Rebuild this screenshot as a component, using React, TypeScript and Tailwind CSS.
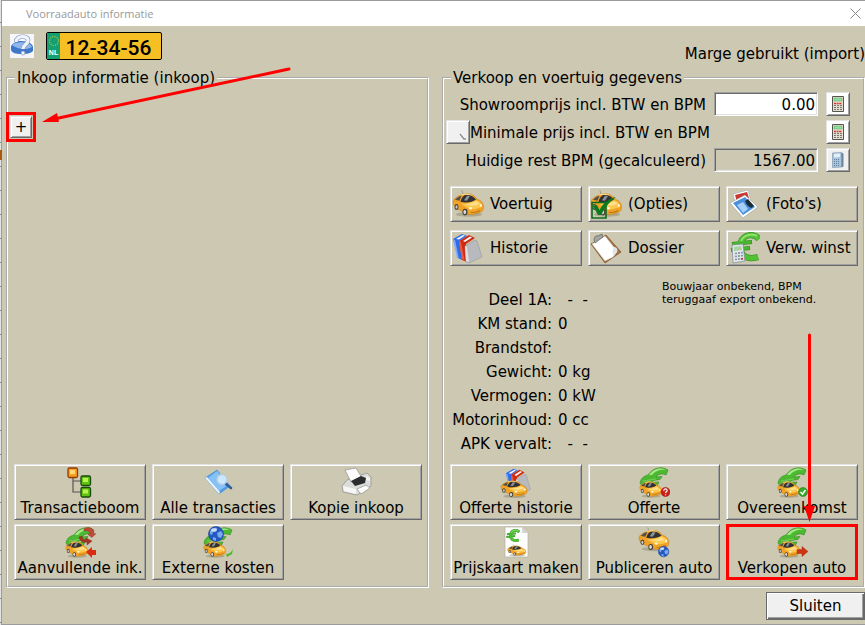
import type { ReactNode } from 'react';
import clsx from 'clsx';

const raised =
  'border border-t-[#e3e3e3] border-l-[#e3e3e3] border-r-[#696969] border-b-[#696969] shadow-[inset_1px_1px_0_#ffffff,inset_-1px_-1px_0_#a0a0a0]';
const sunken =
  'border border-t-[#a0a0a0] border-l-[#a0a0a0] border-r-white border-b-white shadow-[inset_1px_1px_0_#696969,inset_-1px_-1px_0_#e3e3e3]';

function Car() {
  return (
    <g>
      <ellipse cx="17" cy="26" rx="13" ry="2.500" fill="#8d8874" opacity="0.5" />
      <path d="M10 0.500l1 4" stroke="#777" strokeWidth="0.600" />
      <path
        d="M1 13c0-3 2-4 4-5.500 3-2.500 6-3.500 10-3.500 5 0 8 2.500 10.500 6 4 1 6 4.500 6 8.500 0 3-1 4.500-4 5.500-4 2-8 2.500-11.500 2-3-1-5-3.500-8-4.500-4-2-7-4.500-7-8.500z"
        fill="#f0a326"
        stroke="#b87a1c"
        strokeWidth="0.500"
      />
      <path d="M9 14c4 1 9 0 14-3 4 0 7 3 7 7-3 1-8 3-12 2.500-3-2-6-3.500-9-6.500z" fill="#fcc74c" />
      <path d="M13 15c4 0 8-1 11-3 2 1 3 2 3.500 3-4 2-9 2.500-14.500 0z" fill="#ffe08c" />
      <path d="M3 10.500c1.500-2.500 4-4 6.500-4.500l-2 5.500z" fill="#55524a" />
      <path d="M8.500 12.500c.5-3 2-5.500 4-7 5-1 9 1 11.500 4.500-4 3-9.500 4-15.500 2.500z" fill="#2f3134" />
      <path d="M12 11l3-5 3 .5-3 5z" fill="#8c9298" />
      <path d="M7 5.800c4-2.500 9-2.500 13-.3-4-.8-9-.8-13 .3z" fill="#fee493" />
      <ellipse cx="4.500" cy="18" rx="2" ry="3.200" fill="#4a463f" />
      <ellipse cx="4.500" cy="18" rx="1" ry="1.900" fill="#cfcfcf" />
      <ellipse cx="13" cy="23.500" rx="2.500" ry="3.500" fill="#45423c" />
      <ellipse cx="12.800" cy="23.500" rx="1.400" ry="2.200" fill="#dcdcdc" />
      <ellipse cx="18.500" cy="19.500" rx="1.500" ry="1.300" fill="#fff9df" />
      <ellipse cx="28.800" cy="16.500" rx="1" ry="1.400" fill="#fff9df" />
      <path d="M19 23.500c4 0 7-1 9.500-2.500l-.5 1.500c-3 1.500-6 2-9 2z" fill="#b57416" />
    </g>
  );
}

function Euro() {
  return (
    <g>
      <path d="M31 7C26 1 16 2 13 10c-4 11 4 19 17 15" stroke="#2f8a1d" strokeWidth="6.200" />
      <path d="M4 12l20-2M3 18l19-2" stroke="#2f8a1d" strokeWidth="4" />
      <path d="M31 7C26 1 16 2 13 10c-4 11 4 19 17 15" stroke="#52c234" strokeWidth="5.200" />
      <path d="M4.500 12l19-2M3.500 18l18-2" stroke="#48b52e" strokeWidth="3.200" />
      <path d="M29 4C23 1 16 3 13 9" stroke="#98e376" strokeWidth="1.600" />
    </g>
  );
}

function Books() {
  return (
    <g>
      <path d="M1 7l9-5 5 2-8 5 3 19-4-2z" fill="#2f6be8" />
      <path d="M1 7l2 1 4 19-2-1z" fill="#7fabff" />
      <path d="M4 7l7-4 2 .5-6 4z" fill="#f4f7ff" />
      <path d="M7 9l10-6 6 3-9 6 1 18-5-2z" fill="#cf2a12" />
      <path d="M7 9l2 1 3.500 18-2.500-1z" fill="#e85a42" />
      <path d="M11 9l7-4.500 2 1-7 4.500z" fill="#fbf3f1" />
      <path d="M13 14l10-6 2 1 5 16-13 6-3-1z" fill="#b9babd" stroke="#909196" strokeWidth="0.500" />
      <path d="M13 14l2 1 2 15-3-1z" fill="#dfe0e2" />
    </g>
  );
}

function Globe() {
  return (
    <g>
      <circle cx="8" cy="8" r="7.500" fill="#2458c4" stroke="#173c8f" strokeWidth="0.600" />
      <path d="M2 5c2-3 5-4 7-3l-1 3-3 1-1 3-2-1zM9 7l4-2 2 3-2 4-3-1zM5 11l3 1v3l-3-1z" fill="#7aaae8" />
      <ellipse cx="6" cy="4" rx="3" ry="1.800" fill="#fff" opacity="0.6" />
    </g>
  );
}

function Icon({ children }: { children: ReactNode }) {
  return (
    <svg viewBox="0 0 32 32" className="size-8 shrink-0" fill="none" aria-hidden="true">
      {children}
    </svg>
  );
}

function EuroCar({ children }: { children?: ReactNode }) {
  return (
    <Icon>
      <path d="M2 17c1-5 4-7 8-8 4-6 12-10 20-5l-2 5c-4-2-8-1-10 2l6-.5-2 3-7 1-1 2 7-.5-2 4H4z" fill="#4cba30" stroke="#2f8a1d" strokeWidth="0.600" />
      <path d="M11 9c4-6 11-8 17-5-6-1-11 1-14 5z" fill="#a5e886" />
      <path d="M5 15l13-2M5 18l12-2" stroke="#7fd65e" strokeWidth="0.800" />
      <g transform="translate(1 13) scale(.72 .66)">
        <Car />
      </g>
      {children}
    </Icon>
  );
}

const icons = {
  car: (
    <Icon>
      <g transform="translate(0 2) scale(1 .94)">
        <Car />
      </g>
    </Icon>
  ),
  options: (
    <Icon>
      <g transform="translate(0 2) scale(1 .94)">
        <Car />
      </g>
      <path d="M2 14.500h14V30H2z" stroke="#0c6b1c" strokeWidth="1.600" />
      <path d="M3 18l4-1 2.500 5c4-7 8-11 16.500-13-7 5-11 11-15 18H8z" fill="#0c7a1d" />
    </Icon>
  ),
  photos: (
    <Icon>
      <path d="M5 6l15-4 4 15-15 5z" fill="#fff" stroke="#aaa" strokeWidth="0.600" />
      <path d="M7 7l12-3 2 6-12 4z" fill="#c73830" />
      <path d="M2 15L17 7l13 12-15 11z" fill="#fff" stroke="#9b9b9b" strokeWidth="0.600" />
      <path d="M5 15l12-6 10 10-12 8z" fill="#4b8fdc" />
      <path d="M9 17l6-3 5 7-5 4z" fill="#a5d0f8" />
      <path d="M17 13l3-2 6 7-3 2-4-3z" fill="#1d2c35" />
    </Icon>
  ),
  history: (
    <Icon>
      <Books />
    </Icon>
  ),
  dossier: (
    <Icon>
      <path d="M1 12L16 3l15 17-16 11z" fill="#a8703c" stroke="#70441f" strokeWidth="0.600" />
      <path d="M2 12L15 4l12 15-4 6-8 4z" fill="#fff" stroke="#c9c9c9" strokeWidth="0.500" />
      <path d="M24 15c3 0 4 3 3 5l-3 4c-2-3-2-6 0-9z" fill="#dfe3ea" />
      <path d="M4 8c0-3 2-5 4-4l4-2 1 3-8 6z" fill="#a3a3a0" stroke="#555" strokeWidth="0.600" />
    </Icon>
  ),
  profit: (
    <Icon>
      <Euro />
      <path d="M4 13l11-1 2 17-12 2z" fill="#dfe5ea" stroke="#7d8b96" strokeWidth="0.700" />
      <path d="M6 15l7-1 1 4-8 1z" fill="#a6d49b" />
      <path d="M7 21.500l8-1M7 24.500l8-1M7 27.500l9-1" stroke="#8896a3" strokeWidth="1.600" strokeDasharray="2 1" />
      <path d="M13 27l2-.3" stroke="#c33" strokeWidth="1.500" />
    </Icon>
  ),
  tree: (
    <Icon>
      <path d="M9 11v15h8M9 15h8" stroke="#555" strokeWidth="1.200" />
      <rect x="4" y="2" width="9.500" height="9.500" rx="1.500" fill="#f9a11b" stroke="#8f3a08" strokeWidth="1.300" />
      <rect x="6" y="4" width="5" height="4" fill="#ffd873" />
      <rect x="17" y="10" width="9.500" height="9.500" rx="1.500" fill="#62c212" stroke="#184a0b" strokeWidth="1.300" />
      <rect x="19" y="12" width="5" height="4" fill="#baf24d" />
      <rect x="17" y="21.500" width="9.500" height="9.500" rx="1.500" fill="#62c212" stroke="#184a0b" strokeWidth="1.300" />
      <rect x="19" y="23.500" width="5" height="4" fill="#baf24d" />
    </Icon>
  ),
  transactions: (
    <Icon>
      <path d="M3 12L15 4l13 16-11 8z" fill="#4e9ce6" stroke="#3f86cd" strokeWidth="0.500" />
      <path d="M6 12l9-7 11 14-9 6z" fill="#86c1f6" />
      <path d="M3 12l14 16 1-2L5 11z" fill="#eaf4fd" />
      <path d="M24 18l5 4" stroke="#2b5f9c" strokeWidth="2.600" strokeLinecap="round" />
      <circle cx="20" cy="13.500" r="5" fill="#d8eefe" fillOpacity="0.85" stroke="#b4cbe0" strokeWidth="1.300" />
    </Icon>
  ),
  printer: (
    <Icon>
      <path d="M2 20l5-6 20-7 4 4v9l-14 9-14-3z" fill="#dcdcda" stroke="#8c8c8a" strokeWidth="0.700" />
      <path d="M5 4l11-2 6 10-11 4z" fill="#fcfcfc" stroke="#8f8f8f" strokeWidth="0.700" />
      <path d="M11 15l10-5 5 2-1 5-10 3z" fill="#2c2d2f" />
      <path d="M3 20l13 3v5l-12-3z" fill="#f6f6f5" />
      <path d="M17 23l9-4 4 3-9 6z" fill="#fff" stroke="#8c8c8a" strokeWidth="0.700" />
      <path d="M26 10l4 2v3l-4-1z" fill="#f3f3f1" />
    </Icon>
  ),
  additional: (
    <EuroCar>
      <path d="M20 3c5-3 10-1 10 5l2-.5-4 4-4-3 2-.5c0-3-3-4-6-3z" fill="#c04a38" stroke="#8a2418" strokeWidth="0.400" />
      <path d="M15 11c1 5 5 6 8 5v3l5-4-6-3v2c-2 0-4-1-4-4z" fill="#a83425" stroke="#7c1d12" strokeWidth="0.400" />
      <path d="M22 26l6-5v3h5v5h-5v3z" fill="#d92c10" />
    </EuroCar>
  ),
  external: (
    <EuroCar>
      <path d="M24 28c3 0 5-1 7-5l-1 5-5 3z" fill="#4cba30" />
      <g transform="translate(6 0)">
        <Globe />
      </g>
    </EuroCar>
  ),
  offerHistory: (
    <Icon>
      <g transform="translate(5 1) scale(.85 .9)">
        <Books />
      </g>
      <g transform="translate(0 12) scale(.86 .7)">
        <Car />
      </g>
    </Icon>
  ),
  offer: (
    <EuroCar>
      <circle cx="27.500" cy="26" r="4.500" fill="#c9201b" stroke="#8e1111" strokeWidth="0.500" />
      <path d="M25.800 24.700c0-2.500 3.500-2.200 3.300 0-.1 1.200-1.600 1-1.600 2.400M27.500 28.200v1" stroke="#fff" strokeWidth="1.200" />
    </EuroCar>
  ),
  agreement: (
    <EuroCar>
      <circle cx="27" cy="26" r="4.500" fill="#35a82b" stroke="#1d7516" strokeWidth="0.500" />
      <path d="M24.500 26l2 2 3-4" stroke="#fff" strokeWidth="1.500" />
    </EuroCar>
  ),
  priceCard: (
    <Icon>
      <path d="M5 1h17l6 6v24H5z" fill="#fdfdfd" stroke="#aaa99f" strokeWidth="0.600" />
      <path d="M22 1v6h6z" fill="#d6d6d6" />
      <g transform="translate(5 3) scale(.46 .44)">
        <Euro />
      </g>
      <g transform="translate(7 18) scale(.6 .43)">
        <Car />
      </g>
    </Icon>
  ),
  publish: (
    <Icon>
      <g transform="translate(0 1) scale(.98 .85)">
        <Car />
      </g>
      <g transform="translate(20 20) scale(.7)">
        <Globe />
      </g>
    </Icon>
  ),
  sell: (
    <EuroCar>
      <path d="M32 25.500l-6-5v3h-5v4h5v3z" fill="#d03312" stroke="#9a220a" strokeWidth="0.400" />
    </EuroCar>
  ),
};

function WideButton({ icon, label }: { icon: ReactNode; label: string }) {
  return (
    <button type="button" className={clsx('flex h-9 items-center gap-1.5 whitespace-nowrap px-px', raised)}>
      {icon}
      <span>{label}</span>
    </button>
  );
}

function TallButton({ icon, label, marked }: { icon: ReactNode; label: string; marked?: boolean }) {
  return (
    <button
      type="button"
      className={clsx('relative flex h-14 flex-col items-center justify-between whitespace-nowrap pb-[3px] pt-px leading-4', raised)}
    >
      {icon}
      <span>{label}</span>
      {marked && <span className="absolute -inset-px border-3 border-[#ff0000]" />}
    </button>
  );
}

function CalculatorButton({ label, soft }: { label: string; soft?: boolean }) {
  return (
    <button
      type="button"
      aria-label={label}
      className={clsx('flex size-6 shrink-0 items-center justify-center', soft ? 'bg-[#f0f0f0]' : 'bg-white', raised)}
    >
      {soft ? (
        <svg viewBox="0 0 16 16" className="size-4" fill="none">
          <path d="M2.500 1l9-.5v14.500l-9 .5z" fill="#a9c5dc" stroke="#8199ad" strokeWidth="0.700" />
          <path d="M11.500.5l2 1v13l-2 1z" fill="#6f8598" />
          <path d="M4 2l6-.5V5l-6 .5z" fill="#e2f0fa" />
          <path d="M4 7.500h6M4 9.500h6M4 11.500h6M4 13.500h6" stroke="#5f7f9c" strokeDasharray="1 1" />
        </svg>
      ) : (
        <svg viewBox="0 0 16 16" className="size-4" fill="none">
          <path d="M2.500.5h11v15h-11z" fill="#e3decf" stroke="#55554f" />
          <path d="M4 2h8v3H4z" fill="#8fe09a" stroke="#5ea468" strokeWidth="0.500" />
          <path d="M4 7.500h8" stroke="#d8372a" strokeWidth="1.400" strokeDasharray="2 .6" />
          <path d="M4 9.500h8M4 11.500h8M4 13.500h8" stroke="#77776f" strokeDasharray="2 1" />
        </svg>
      )}
    </button>
  );
}

function Panel({ title, children }: { title: string; children: ReactNode }) {
  return (
    <fieldset className="flex min-w-0 flex-col border-2 border-white pb-1.5 pl-1.5 pr-[5px] [border-style:groove]">
      <legend className="ml-px whitespace-nowrap px-0.5 leading-4">{title}</legend>
      {children}
    </fieldset>
  );
}

function LicensePlate() {
  return (
    <div className="flex h-7 w-[116px] overflow-hidden rounded-xs border border-black bg-[#f6c024]">
      <div className="flex w-[13px] flex-col items-center justify-between bg-[#14a070] pb-0.5 pt-0.5">
        <svg viewBox="0 0 12 12" className="size-3" fill="none" aria-hidden="true">
          <circle cx="6" cy="6" r="4.500" stroke="#a9b83c" strokeWidth="1.400" strokeDasharray="1.200 1.150" />
        </svg>
        <span className="font-['Liberation_Sans'] text-[7px] font-bold leading-[8px] text-white">NL</span>
      </div>
      <span className="flex-1 pr-1 text-center font-[Roboto,sans-serif] text-[21px] font-medium leading-[30px] text-black">12-34-56</span>
    </div>
  );
}

const specs = [
  ['Deel 1A:', '\u00a0\u00a0-\u00a0\u00a0-'],
  ['KM stand:', '0'],
  ['Brandstof:', ''],
  ['Gewicht:', '0 kg'],
  ['Vermogen:', '0 kW'],
  ['Motorinhoud:', '0 cc'],
  ['APK vervalt:', '\u00a0\u00a0-\u00a0\u00a0-'],
];

export default function App() {
  return (
    <div className="relative flex min-h-screen overflow-hidden bg-[repeating-linear-gradient(#e3e3e3_0_22px,#8c8c8c_22px_23px,#e3e3e3_23px_24px)] pl-px font-['DejaVu_Sans',Verdana,sans-serif] text-[15px] text-black">
      <main className="flex flex-1 flex-col border-y border-l border-[#9b9b9b] bg-[#cdc8b1]">
        <header className="flex h-[25px] items-center justify-between bg-white pl-6 pr-1">
          <h1 className="font-['Open_Sans','Noto_Sans',sans-serif] text-[11px] leading-4 text-[#999999]">Voorraadauto informatie</h1>
          <button type="button" aria-label="Venster sluiten">
            <svg viewBox="0 0 11 11" className="size-[11px]" fill="none">
              <path d="M.5.5l10 10M10.500.5l-10 10" stroke="#8a8a8a" />
            </svg>
          </button>
        </header>

        <div className="flex h-11 items-start justify-between pl-2 pt-1.5">
          <div className="flex items-center gap-3">
            <button type="button" aria-label="Help" className="size-6 bg-[#f4f6fa]">
              <svg viewBox="0 0 24 24" className="size-6" fill="none">
                <path d="M1 12c2-3 5-5 9-5 5 0 12 1 13 6v4c-3 3-8 3-12 3-5 0-9-1-10-4z" fill="#3f78c9" />
                <path d="M2 11c3-4 18-4 20 2-5 3-14 3-20-2z" fill="#8fb7ec" />
                <path d="M6 8c0-7 13-7 12-1-1 4-5 4-5 8" stroke="#7d92b5" strokeWidth="4.400" />
                <path d="M6 8c0-7 13-7 12-1-1 4-5 4-5 8" stroke="#f1f5fb" strokeWidth="3.200" />
                <circle cx="13" cy="19" r="2" fill="#f1f5fb" stroke="#7d92b5" strokeWidth="0.700" />
              </svg>
            </button>
            <LicensePlate />
          </div>
          <p className="pt-3 leading-5">Marge gebruikt (import)</p>
        </div>

        <div className="grid flex-1 grid-cols-2 gap-[13px] pl-1">
          <Panel title="Inkoop informatie (inkoop)">
            <div className="relative -ml-1 mt-[30px] h-[22px] w-[22px]">
              <button type="button" className={clsx('h-full w-full bg-[#f0f0f0] text-center leading-5', raised)}>
                +
              </button>
              <span className="absolute -inset-1 border-3 border-[#ff0000]" />
            </div>
            <div className="mt-auto grid grid-cols-3 gap-x-1.5 gap-y-1">
              <TallButton icon={icons.tree} label="Transactieboom" />
              <TallButton icon={icons.transactions} label="Alle transacties" />
              <TallButton icon={icons.printer} label="Kopie inkoop" />
              <TallButton icon={icons.additional} label="Aanvullende ink." />
              <TallButton icon={icons.external} label="Externe kosten" />
            </div>
          </Panel>

          <Panel title="Verkoop en voertuig gegevens">
            <div className="-ml-1 mr-2 flex flex-col gap-1 pt-1.5 leading-5">
              <div className="flex items-center gap-2">
                <label htmlFor="showroom" className="flex-1 whitespace-nowrap pt-0.5 text-right">
                  Showroomprijs incl. BTW en BPM
                </label>
                <input id="showroom" defaultValue="0.00" className={clsx('h-6 w-26 bg-white px-0.5 pt-0.5 text-right', sunken)} />
                <CalculatorButton label="Bereken showroomprijs" />
              </div>
              <div className="flex items-center gap-2">
                <div className="flex flex-1 items-center justify-between">
                  <button type="button" aria-label="Minimale prijs tonen" className={clsx('size-6 shrink-0 bg-[#f0f0f0]', raised)}>
                    <svg viewBox="0 0 22 22" className="size-full" fill="none">
                      <path d="M13 13l4 5h2" stroke="#8d8d8d" strokeWidth="1.300" />
                    </svg>
                  </button>
                  <span className="whitespace-nowrap pt-0.5">Minimale prijs incl. BTW en BPM</span>
                </div>
                <span className="w-26" />
                <CalculatorButton label="Bereken minimale prijs" />
              </div>
              <div className="flex items-center gap-2">
                <label htmlFor="rest" className="flex-1 whitespace-nowrap pt-0.5 text-right">
                  Huidige rest BPM (gecalculeerd)
                </label>
                <input id="rest" readOnly value="1567.00" className={clsx('h-6 w-26 px-0.5 pt-0.5 text-right', sunken)} />
                <CalculatorButton label="Bereken rest BPM" soft />
              </div>
            </div>

            <div className="mt-3.5 grid grid-cols-3 gap-x-1.5 gap-y-2">
              <WideButton icon={icons.car} label="Voertuig" />
              <WideButton icon={icons.options} label="(Opties)" />
              <WideButton icon={icons.photos} label="(Foto's)" />
              <WideButton icon={icons.history} label="Historie" />
              <WideButton icon={icons.dossier} label="Dossier" />
              <WideButton icon={icons.profit} label="Verw. winst" />
            </div>

            <div className="mt-3.5 flex">
              <dl className="w-[212px] pt-2 leading-6">
                {specs.map(([name, value]) => (
                  <div key={name} className="flex gap-1.5">
                    <dt className="flex w-[102px] justify-end whitespace-nowrap">{name}</dt>
                    <dd>{value}</dd>
                  </div>
                ))}
              </dl>
              <p className="text-[11px] leading-[13px]">
                Bouwjaar onbekend, BPM
                <br />
                teruggaaf export onbekend.
              </p>
            </div>

            <div className="mt-auto grid grid-cols-3 gap-x-1.5 gap-y-1 pt-2">
              <TallButton icon={icons.offerHistory} label="Offerte historie" />
              <TallButton icon={icons.offer} label="Offerte" />
              <TallButton icon={icons.agreement} label="Overeenkomst" />
              <TallButton icon={icons.priceCard} label="Prijskaart maken" />
              <TallButton icon={icons.publish} label="Publiceren auto" />
              <TallButton icon={icons.sell} label="Verkopen auto" marked />
            </div>
          </Panel>
        </div>

        <footer className="flex justify-end pb-1 pt-1">
          <button
            type="button"
            className="h-7 w-[99px] border border-[#696969] bg-[#f0f0f0] shadow-[inset_1px_1px_0_#ffffff,inset_-1px_-1px_0_#696969,inset_-2px_-2px_0_#a0a0a0]"
          >
            Sluiten
          </button>
        </footer>
      </main>

      <svg width="865" height="625" className="pointer-events-none absolute left-0 top-0" fill="none" aria-hidden="true">
        <path d="M0 150h2v10H0z" fill="#a85a12" />
        <path d="M289 69L54 119" stroke="#ff0000" strokeWidth="3" strokeLinecap="round" />
        <path d="M42 122l15-9 2 9z" fill="#ff0000" />
        <path d="M809.500 335v176" stroke="#ff0000" strokeWidth="3" strokeLinecap="round" />
        <path d="M804 506h11l-5.500 16z" fill="#ff0000" />
      </svg>
    </div>
  );
}
